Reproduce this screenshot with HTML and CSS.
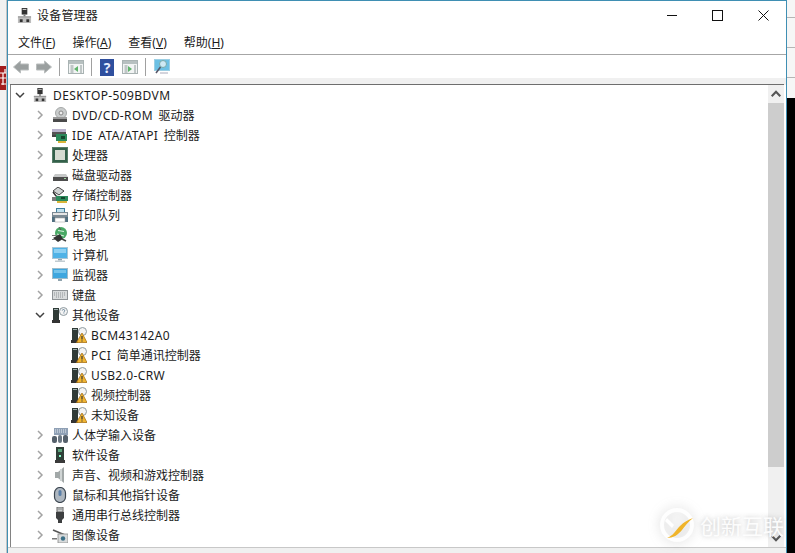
FILE: index.html
```html
<!DOCTYPE html>
<html lang="zh-CN">
<head>
  <meta charset="UTF-8" />
  <title>设备管理器</title>
  <link rel="stylesheet" href="styles.css">
</head>
<body>
  <svg class="defs" width="0" height="0">
    <defs>
      <symbol id="i-pc" viewBox="0 0 16 16">
        <rect x="5" y="0" width="6" height="7" fill="#333"/><rect x="6" y="1" width="4" height="1" fill="#ddd"/>
        <rect x="7" y="7" width="2" height="2" fill="#777"/>
        <rect x="1" y="9" width="14" height="7" fill="#bdbdbd"/><rect x="1" y="9" width="14" height="1" fill="#8a8a8a"/>
        <rect x="3" y="12" width="3" height="3" fill="#333"/><rect x="10" y="12" width="3" height="3" fill="#333"/>
      </symbol>
      <symbol id="i-dvd" viewBox="0 0 16 16">
        <circle cx="9" cy="6" r="5.5" fill="#c9cccc" stroke="#a5a8a8"/><circle cx="9" cy="6" r="2" fill="#eee" stroke="#888"/>
        <rect x="1" y="10" width="14" height="2" fill="#999"/><rect x="1" y="12" width="14" height="3" fill="#4a4a4a"/>
      </symbol>
      <symbol id="i-ide" viewBox="0 0 16 16">
        <rect x="0" y="2" width="14" height="3" fill="#b9b3cc"/><rect x="0" y="5" width="14" height="3" fill="#555"/>
        <rect x="0" y="8" width="5" height="2" fill="#444"/>
        <rect x="4" y="7" width="11" height="7" fill="#2c8a5c"/><rect x="9" y="9" width="4" height="3" fill="#14492f"/>
        <rect x="6" y="14" width="8" height="2" fill="#d9b53a"/>
      </symbol>
      <symbol id="i-cpu" viewBox="0 0 16 16">
        <rect x="0" y="0" width="16" height="16" fill="#33604a"/>
        <rect x="0.5" y="0.5" width="15" height="15" fill="none" stroke="#7d9a86" stroke-dasharray="1 1"/>
        <rect x="3" y="3" width="10" height="10" fill="#d6dcd2"/>
      </symbol>
      <symbol id="i-disk" viewBox="0 0 16 16">
        <path d="M3 7h11l2 3H1z" fill="#c6c8c8"/><rect x="1" y="10" width="15" height="4" fill="#4d4d4d"/>
        <rect x="12" y="11" width="2" height="1" fill="#9fd39f"/>
      </symbol>
      <symbol id="i-storage" viewBox="0 0 16 16">
        <path d="M6 0l6 4-5 4-6-4z" fill="#cfd2d2" stroke="#444" stroke-width="1"/><path d="M1 5l3 4 2 1" fill="none" stroke="#333" stroke-width="1.5"/>
        <rect x="4" y="9" width="12" height="5" fill="#2c8a5c"/><rect x="9" y="10" width="4" height="2" fill="#14492f"/>
        <rect x="5" y="14" width="10" height="2" fill="#d9b53a"/><rect x="0" y="10" width="4" height="4" fill="#7a7a7a"/>
      </symbol>
      <symbol id="i-print" viewBox="0 0 16 16">
        <rect x="4" y="1" width="9" height="4" fill="#3f7f9e"/><rect x="5" y="2" width="7" height="3" fill="#bfe0ee"/>
        <rect x="0" y="5" width="16" height="6" fill="#7b8a94"/><rect x="1" y="6" width="14" height="2" fill="#e6e6e6"/>
        <rect x="0" y="10" width="3" height="5" fill="#4f6f80"/><rect x="13" y="10" width="3" height="5" fill="#4f6f80"/>
        <rect x="3" y="11" width="10" height="4" fill="#fff" stroke="#999" stroke-width="0.5"/>
      </symbol>
      <symbol id="i-battery" viewBox="0 0 16 16">
        <circle cx="9" cy="6" r="6" fill="#49a865"/><path d="M6 3.5l6 1M5 7l7 2" stroke="#d7eedc" stroke-width="1.2"/>
        <path d="M7 0l2 3" stroke="#555"/>
        <path d="M1 11l7-4 3 5-5 3z" fill="#333"/><path d="M0 8.5h5M0 12.5h3" stroke="#777" stroke-width="1.2"/>
        <path d="M10 12l4 2" stroke="#444" stroke-width="1.4"/>
      </symbol>
      <symbol id="i-computer" viewBox="0 0 16 16">
        <rect x="0.5" y="0.5" width="15" height="11" fill="#4fb2e6" stroke="#a9c6d6"/><rect x="2" y="2" width="12" height="4" fill="#8dd0f2"/>
        <rect x="6" y="12" width="4" height="1.5" fill="#8fa3ad"/><rect x="3" y="13.5" width="10" height="1.5" fill="#c2ccd1"/>
      </symbol>
      <symbol id="i-monitor" viewBox="0 0 16 16">
        <rect x="0.5" y="1.5" width="15" height="10" fill="#3ea6de" stroke="#9dbccb"/><rect x="2" y="3" width="12" height="3" fill="#74c3ea"/>
        <rect x="6" y="12" width="4" height="2" fill="#8fa3ad"/>
      </symbol>
      <symbol id="i-keyboard" viewBox="0 0 16 16">
        <rect x="0" y="3" width="16" height="10" fill="#8f9396"/><rect x="1" y="4" width="14" height="8" fill="#d9dbdc"/>
        <path d="M2 6h12M2 8h12M4 10h8" stroke="#8f9396" stroke-dasharray="1 1"/>
      </symbol>
      <symbol id="i-other" viewBox="0 0 16 16">
        <rect x="1" y="1" width="6" height="12" fill="#2f3a36"/><rect x="2" y="2" width="4" height="1" fill="#9aa"/>
        <rect x="0" y="13" width="8" height="3" fill="#333"/>
        <circle cx="11.5" cy="4.5" r="4" fill="#f4f4f4" stroke="#8e9aa0"/><path d="M10.3 3.5a1.2 1.2 0 1 1 1.6 1.3v.8M11.9 6.5v.6" fill="none" stroke="#5b7b92" stroke-width="0.9"/>
      </symbol>
      <symbol id="i-warn" viewBox="0 0 16 16">
        <rect x="1" y="1" width="6" height="12" fill="#2f3a36"/><rect x="2" y="2" width="4" height="1" fill="#9aa"/>
        <rect x="0" y="13" width="7" height="3" fill="#333"/>
        <circle cx="11.5" cy="4.5" r="4" fill="#f4f4f4" stroke="#8e9aa0"/>
        <path d="M11 6l5 9.5H5.500z" fill="#f2b632" stroke="#a8741a" stroke-width="0.8"/><path d="M11 9v3.500M11 13.500v1" stroke="#333" stroke-width="1.2"/>
      </symbol>
      <symbol id="i-hid" viewBox="0 0 16 16">
        <rect x="2" y="1" width="14" height="7" fill="#8fa0b5"/><path d="M3 3h12M3 5h12" stroke="#e6ebf0" stroke-dasharray="1 1"/>
        <rect x="0" y="9" width="5" height="7" rx="2" fill="#55606b"/><rect x="6" y="8" width="4" height="8" rx="2" fill="#6c7884"/><rect x="11" y="8" width="5" height="8" rx="2" fill="#55606b"/>
      </symbol>
      <symbol id="i-software" viewBox="0 0 16 16">
        <rect x="4" y="0" width="8" height="13" fill="#2f4038"/><rect x="6" y="2" width="4" height="3" fill="#5aa37b"/><rect x="7" y="8" width="2" height="2" fill="#8fc"/>
        <rect x="3" y="13" width="10" height="3" fill="#3a3a3a"/>
      </symbol>
      <symbol id="i-sound" viewBox="0 0 16 16">
        <path d="M3 5h3l6-5v16l-6-5H3z" fill="#a2a8a8"/><path d="M9 2v12" stroke="#cfd4d4" stroke-width="2"/>
      </symbol>
      <symbol id="i-mouse" viewBox="0 0 16 16">
        <rect x="2.500" y="0.500" width="11" height="15" rx="5.500" fill="#aeb7c0" stroke="#3c4650" stroke-width="1.200"/>
        <rect x="6.500" y="3" width="3" height="6" rx="1.500" fill="#5a7fa8"/>
      </symbol>
      <symbol id="i-usb" viewBox="0 0 16 16">
        <rect x="5" y="0" width="6" height="5" fill="#c9cccc" stroke="#666"/><rect x="6.500" y="1.500" width="1" height="1" fill="#444"/><rect x="8.500" y="1.500" width="1" height="1" fill="#444"/>
        <path d="M4 5h8v6l-2 2v3H6v-3l-2-2z" fill="#3d3f40"/>
      </symbol>
      <symbol id="i-camera" viewBox="0 0 16 16">
        <path d="M1 3l12 5" stroke="#555" stroke-width="1.500"/><rect x="0" y="11" width="5" height="1.500" fill="#777"/>
        <rect x="6" y="7" width="10" height="9" fill="#d8dadb" stroke="#8a8a8a" stroke-width="0.800"/><circle cx="11" cy="11.500" r="2.200" fill="#3b6f86"/>
      </symbol>
      <symbol id="i-chev" viewBox="0 0 10 10">
        <path d="M3 1l4 4-4 4" fill="none" stroke="#a3a3a3" stroke-width="1.500"/>
      </symbol>
      <symbol id="i-open" viewBox="0 0 10 10">
        <path d="M1 3l4 4 4-4" fill="none" stroke="#404040" stroke-width="1.500"/>
      </symbol>
      <symbol id="i-pane" viewBox="0 0 16 16">
        <rect x="0.500" y="1.500" width="15" height="13" fill="#f2f4f4" stroke="#a9b3b3"/>
        <rect x="1" y="2" width="14" height="3" fill="#b7c0c0"/>
        <path d="M2.500 7h3M2.500 9h3M2.500 11h3M2.500 13h3M12 7h2M12 9h2M12 11h2M12 13h2" stroke="#8e9a9a"/>
      </symbol>
    </defs>
  </svg>

  <div class="side-left">
    <svg class="side-badge" viewBox="0 0 7 24"><rect width="7" height="24" fill="#a31c1c"/><path d="M0 7h7M3 7v12M0 12h7M1 18h6M5 3v4" stroke="#fff" stroke-width="1.200"/></svg>
  </div>

  <div class="window">
    <div class="titlebar">
      <svg class="title-icon"><use href="#i-pc"/></svg>
      <span class="title-text">设备管理器</span>
      <div class="controls">
        <span class="ctl ctl-min"></span>
        <span class="ctl ctl-max"></span>
        <svg class="ctl-close" viewBox="0 0 11 11"><path d="M0.500 0.500l10 10M10.500 0.500l-10 10" stroke="#111" stroke-width="1"/></svg>
      </div>
    </div>

    <div class="menubar">
      <span>文件(<u>F</u>)</span>
      <span>操作(<u>A</u>)</span>
      <span>查看(<u>V</u>)</span>
      <span>帮助(<u>H</u>)</span>
    </div>

    <div class="toolbar">
      <svg class="tool" viewBox="0 0 16 14"><path d="M0.500 7l7-6v3h8v6h-8v3z" fill="#9a9f9f" stroke="#b9bdbd"/></svg>
      <svg class="tool" viewBox="0 0 16 14"><path d="M15.500 7l-7-6v3h-8v6h8v3z" fill="#9a9f9f" stroke="#b9bdbd"/></svg>
      <span class="tool-sep"></span>
      <svg class="tool" viewBox="0 0 16 16"><use href="#i-pane"/><path d="M10 7v6l-4-3z" fill="#5fb36a"/></svg>
      <span class="tool-sep"></span>
      <span class="tool-help">?</span>
      <svg class="tool" viewBox="0 0 16 16"><use href="#i-pane"/><path d="M6 7v6l4-3z" fill="#5fb36a"/></svg>
      <span class="tool-sep"></span>
      <svg class="tool" viewBox="0 0 16 16"><rect x="0.500" y="0.500" width="15" height="11" fill="#6cc0e4" stroke="#9ccfe4"/><circle cx="9" cy="5" r="3.500" fill="#cfe9f4" stroke="#7aa"/><path d="M6.500 8l-4.500 6" stroke="#556" stroke-width="1.500"/><path d="M6 14h8" stroke="#aab"/></svg>
    </div>

    <div class="strip"></div>

    <div class="content">
      <ul class="tree">
        <li class="row lv0"><svg class="arrow"><use href="#i-open"/></svg><svg class="icon"><use href="#i-pc"/></svg><span class="lat">DESKTOP-509BDVM</span></li>
        <li class="row lv1"><svg class="arrow"><use href="#i-chev"/></svg><svg class="icon"><use href="#i-dvd"/></svg><span class="lat">DVD/CD-ROM </span>驱动器</li>
        <li class="row lv1"><svg class="arrow"><use href="#i-chev"/></svg><svg class="icon"><use href="#i-ide"/></svg><span class="lat">IDE ATA/ATAPI </span>控制器</li>
        <li class="row lv1"><svg class="arrow"><use href="#i-chev"/></svg><svg class="icon"><use href="#i-cpu"/></svg>处理器</li>
        <li class="row lv1"><svg class="arrow"><use href="#i-chev"/></svg><svg class="icon"><use href="#i-disk"/></svg>磁盘驱动器</li>
        <li class="row lv1"><svg class="arrow"><use href="#i-chev"/></svg><svg class="icon"><use href="#i-storage"/></svg>存储控制器</li>
        <li class="row lv1"><svg class="arrow"><use href="#i-chev"/></svg><svg class="icon"><use href="#i-print"/></svg>打印队列</li>
        <li class="row lv1"><svg class="arrow"><use href="#i-chev"/></svg><svg class="icon"><use href="#i-battery"/></svg>电池</li>
        <li class="row lv1"><svg class="arrow"><use href="#i-chev"/></svg><svg class="icon"><use href="#i-computer"/></svg>计算机</li>
        <li class="row lv1"><svg class="arrow"><use href="#i-chev"/></svg><svg class="icon"><use href="#i-monitor"/></svg>监视器</li>
        <li class="row lv1"><svg class="arrow"><use href="#i-chev"/></svg><svg class="icon"><use href="#i-keyboard"/></svg>键盘</li>
        <li class="row lv1"><svg class="arrow"><use href="#i-open"/></svg><svg class="icon"><use href="#i-other"/></svg>其他设备</li>
        <li class="row lv2"><svg class="icon"><use href="#i-warn"/></svg><span class="lat">BCM43142A0</span></li>
        <li class="row lv2"><svg class="icon"><use href="#i-warn"/></svg><span class="lat">PCI </span>简单通讯控制器</li>
        <li class="row lv2"><svg class="icon"><use href="#i-warn"/></svg><span class="lat">USB2.0-CRW</span></li>
        <li class="row lv2"><svg class="icon"><use href="#i-warn"/></svg>视频控制器</li>
        <li class="row lv2"><svg class="icon"><use href="#i-warn"/></svg>未知设备</li>
        <li class="row lv1"><svg class="arrow"><use href="#i-chev"/></svg><svg class="icon"><use href="#i-hid"/></svg>人体学输入设备</li>
        <li class="row lv1"><svg class="arrow"><use href="#i-chev"/></svg><svg class="icon"><use href="#i-software"/></svg>软件设备</li>
        <li class="row lv1"><svg class="arrow"><use href="#i-chev"/></svg><svg class="icon"><use href="#i-sound"/></svg>声音、视频和游戏控制器</li>
        <li class="row lv1"><svg class="arrow"><use href="#i-chev"/></svg><svg class="icon"><use href="#i-mouse"/></svg>鼠标和其他指针设备</li>
        <li class="row lv1"><svg class="arrow"><use href="#i-chev"/></svg><svg class="icon"><use href="#i-usb"/></svg>通用串行总线控制器</li>
        <li class="row lv1"><svg class="arrow"><use href="#i-chev"/></svg><svg class="icon"><use href="#i-camera"/></svg>图像设备</li>
      </ul>

      <div class="scrollbar">
        <svg class="sb-btn" viewBox="0 0 15 16"><path d="M3.500 10l4-4 4 4" fill="none" stroke="#555" stroke-width="2"/></svg>
        <div class="sb-thumb"></div>
        <div class="sb-track"></div>
        <svg class="sb-btn" viewBox="0 0 15 16"><path d="M3.500 6l4 4 4-4" fill="none" stroke="#555" stroke-width="2"/></svg>
      </div>
    </div>

    <div class="statusbar"></div>
  </div>

  <div class="side-right">
    <div class="side-line"></div>
    <div class="side-line"></div>
    <div class="side-line"></div>
    <div class="side-black"></div>
  </div>

  <div class="watermark">
    <svg class="wm-logo" viewBox="0 0 36 36">
      <circle cx="18" cy="18" r="15" fill="none" stroke="#fff" stroke-width="4" opacity="0.9"/>
      <path d="M8 11l7 7-2 3-7-7z" fill="#fff"/>
      <path d="M8 31c6-2 9-8 13-12 4-4 8-6 13-8-5 4-8 8-11 12-4 5-9 8-15 8z" fill="#f0b429"/>
    </svg>
    <span class="wm-text">创新互联</span>
  </div>
</body>
</html>
```

FILE: styles.css
```css
* {
  margin: 0;
  padding: 0;
  box-sizing: border-box;
}

html, body {
  height: 553px;
  overflow: hidden;
}

body {
  display: flex;
  position: relative;
  background: #fff;
  color: #1c1c1c;
  font-family: "Noto Sans", "Noto Sans CJK SC", sans-serif;
  font-size: 12px;
}

.defs {
  position: absolute;
}

.side-left {
  width: 7px;
  padding-top: 66px;
  background: #f1f1f1;
  border-right: 1px solid #c4c4c4;
  overflow: hidden;
}

.side-badge {
  display: block;
  width: 7px;
  height: 24px;
}

.side-right {
  width: 8px;
  display: flex;
  flex-direction: column;
  background: #f6f6f6;
}

.side-line {
  height: 30px;
  border-bottom: 1px solid #b5b5b5;
}

.side-line:first-child {
  height: 18px;
}

.side-black {
  flex: 1;
  margin-top: 20px;
  background: #000;
}

.window {
  flex: 1;
  display: flex;
  flex-direction: column;
  background: #fff;
  border: 1px solid #3f8fb3;
  border-bottom: none;
}

.titlebar {
  height: 29px;
  display: flex;
  align-items: center;
  padding: 0 0 1px 9px;
}

.title-icon {
  width: 15px;
  height: 15px;
  margin-right: 5px;
}

.title-text {
  font-size: 12px;
  letter-spacing: 0.2px;
}

.controls {
  margin-left: auto;
  height: 11px;
  display: flex;
  align-items: center;
  margin-right: 17px;
}

.ctl-min {
  width: 10px;
  height: 1px;
  background: #111;
  margin-right: 35px;
}

.ctl-max {
  width: 11px;
  height: 11px;
  border: 1px solid #111;
  margin-right: 35px;
}

.ctl-close {
  width: 11px;
  height: 11px;
}

.menubar {
  height: 25px;
  display: flex;
  align-items: center;
  gap: 17px;
  padding-left: 10px;
  border-bottom: 1px solid #a6a6a6;
}

.toolbar {
  height: 23px;
  display: flex;
  align-items: center;
  padding: 1px 0 0 5px;
}

.tool {
  width: 16px;
  height: 16px;
  margin-right: 7px;
}

.tool-help {
  width: 14px;
  height: 17px;
  margin-right: 8px;
  background: #2f4f9e;
  color: #e4ecff;
  font-size: 14px;
  font-weight: bold;
  line-height: 17px;
  text-align: center;
}

.tool-sep {
  width: 1px;
  height: 18px;
  background: #a0a0a0;
  margin-right: 8px;
}

.strip {
  height: 7px;
  background: #f0f0f0;
  border-bottom: 1px solid #6e6e6e;
  margin: 0 2px;
  box-shadow: -2px 0 0 #f0f0f0, 2px 0 0 #f0f0f0;
}

.content {
  flex: 1;
  min-height: 0;
  display: flex;
  margin: 0 2px;
  border-left: 1px solid #828282;
}

.tree {
  flex: 1;
  list-style: none;
  overflow: hidden;
}

.row {
  height: 20px;
  display: flex;
  align-items: center;
  white-space: pre;
}

.lat {
  letter-spacing: 0.4px;
  word-spacing: 2px;
}

.lv0 {
  padding-left: 4px;
}

.lv1 {
  padding-left: 24px;
}

.lv2 {
  padding-left: 60px;
}

.arrow {
  width: 10px;
  height: 10px;
  flex: none;
}

.icon {
  width: 16px;
  height: 16px;
  flex: none;
  margin: 0 4px 0 7px;
}

.lv0 .icon {
  width: 14px;
  margin: 0 6px 0 8px;
}

.lv2 .icon {
  margin: 0 4px 0 0;
}

.scrollbar {
  width: 16px;
  display: flex;
  flex-direction: column;
  background: #f0f0f0;
}

.sb-btn {
  width: 16px;
  height: 18px;
  flex: none;
}

.sb-thumb {
  height: 364px;
  background: #cdcdcd;
}

.sb-track {
  flex: 1;
}

.statusbar {
  height: 6px;
  background: #f0f0f0;
  border-top: 1px solid #c8c8c8;
}

.watermark {
  position: absolute;
  left: 659px;
  top: 507px;
  display: flex;
  align-items: center;
  gap: 5px;
}

.wm-logo {
  width: 36px;
  height: 36px;
  filter: drop-shadow(0 0 6px rgba(120, 120, 120, 0.35));
}

.wm-text {
  color: rgba(255, 255, 255, 0.92);
  font-size: 21px;
  text-shadow: 0 0 5px rgba(120, 120, 120, 0.45);
}
```
